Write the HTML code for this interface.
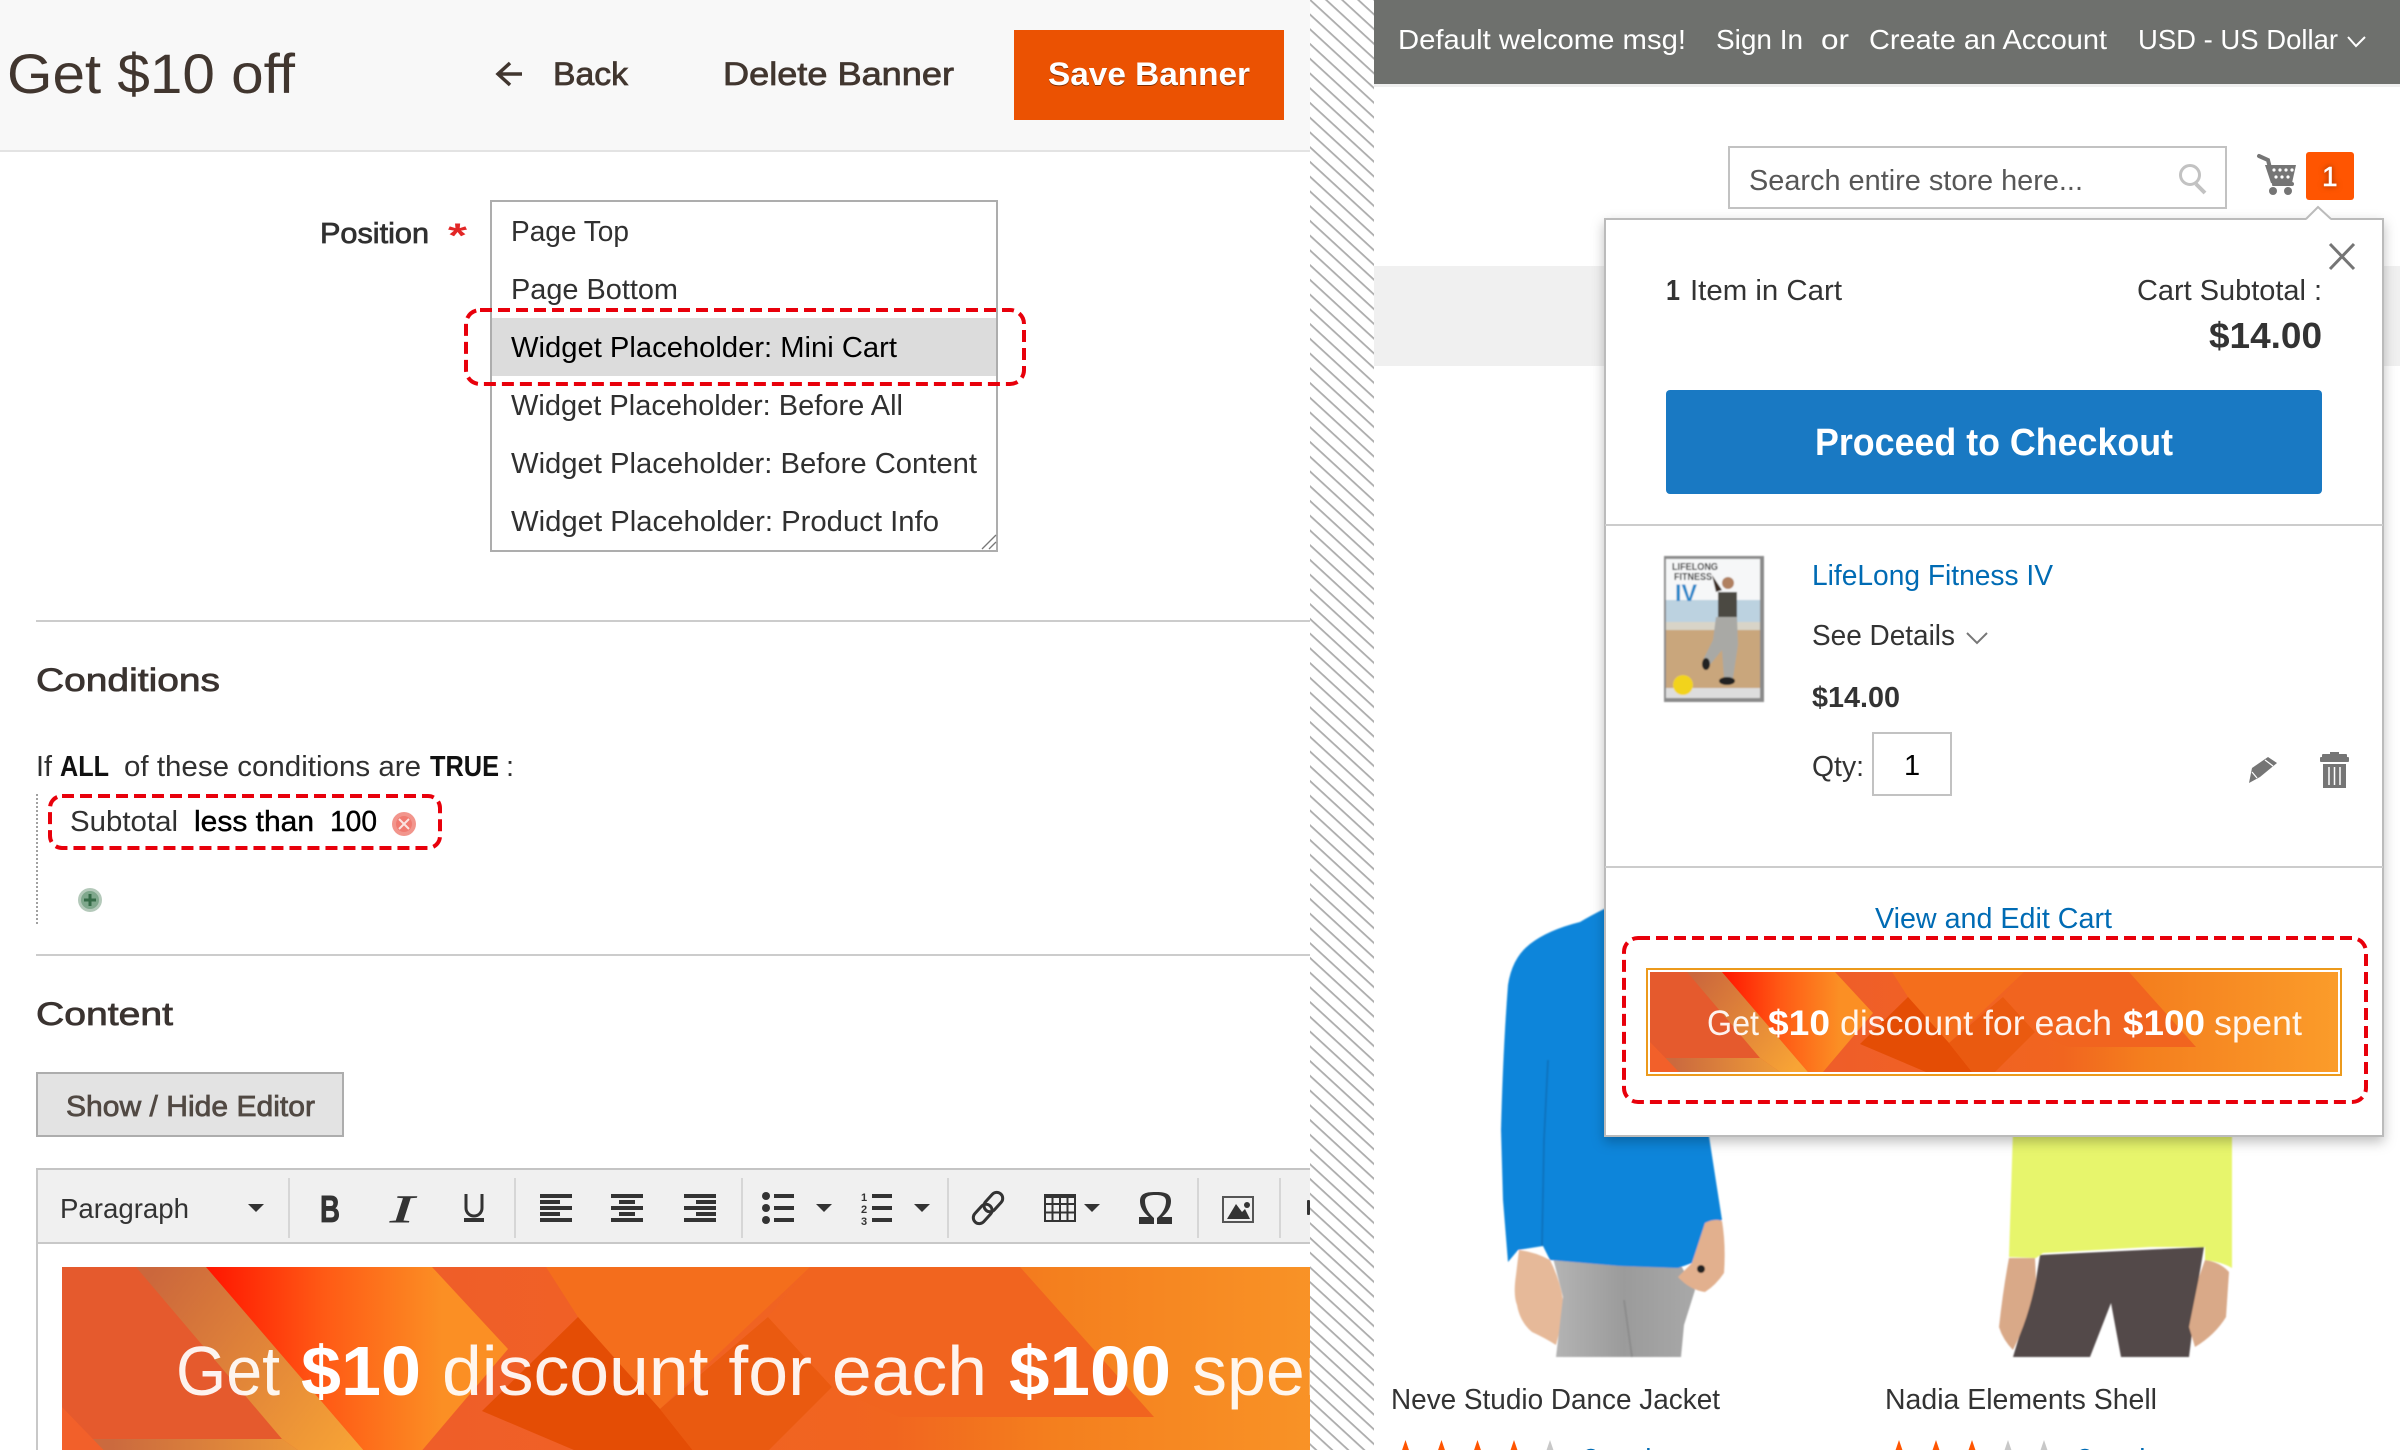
<!DOCTYPE html>
<html lang="en"><head><meta charset="utf-8"><title>Get $10 off</title>
<style>
html,body{margin:0;padding:0;background:#fff}
svg{display:block}
text{font-family:"Liberation Sans",sans-serif;white-space:pre}
.b{font-weight:700}
.s{stroke-width:.75px;paint-order:stroke}
.o{font-size:29px;fill:#303030}
.h{font-size:32px;fill:#3a3330;stroke:#3a3330}
.t{font-size:28px;fill:#fff}
.c{font-size:29px;fill:#333}
.l{fill:#006bb4}
</style></head><body>
<svg width="2400" height="1450" viewBox="0 0 2400 1450" xmlns="http://www.w3.org/2000/svg">
<defs>
<pattern id="st" patternUnits="userSpaceOnUse" width="100" height="10.85" patternTransform="translate(1310,13.3) rotate(42.6)">
<rect width="100" height="10.85" fill="#fff"/><rect y="0" width="100" height="1.8" fill="#acacac"/>
</pattern>
<linearGradient id="g0" x1="0" x2="1" y1="0" y2="0"><stop offset="0" stop-color="#e2592b"/><stop offset=".27" stop-color="#ef5e29"/><stop offset=".6" stop-color="#f1651f"/><stop offset=".72" stop-color="#f47f1e"/><stop offset="1" stop-color="#fb9c2a"/></linearGradient>
<linearGradient id="g1" gradientUnits="userSpaceOnUse" x1="40" y1="10" x2="150" y2="90"><stop offset="0" stop-color="#cb673c"/><stop offset="1" stop-color="#f8a435"/></linearGradient>
<linearGradient id="g2" gradientUnits="userSpaceOnUse" x1="72" y1="0" x2="190" y2="0"><stop offset="0" stop-color="#ff1500"/><stop offset=".5" stop-color="#ff5a15"/><stop offset="1" stop-color="#fb8f24"/></linearGradient>
<linearGradient id="g3" gradientUnits="userSpaceOnUse" x1="25" y1="0" x2="130" y2="0"><stop offset="0" stop-color="#cb6a3e"/><stop offset="1" stop-color="#ef9c38"/></linearGradient>
<linearGradient id="pn" x1="0" x2="1" y1="0" y2="0"><stop offset="0" stop-color="#b4b4b4"/><stop offset=".5" stop-color="#9b9b9b"/><stop offset="1" stop-color="#a8a8a8"/></linearGradient>
<g id="bn">
<rect width="688" height="100" fill="url(#g0)"/>
<polygon points="0,0 37,0 110,86 0,86" fill="#e55a2d"/>
<polygon points="37,0 72,0 158,100 130,100 110,86" fill="url(#g1)"/>
<polygon points="0,86 110,86 130,100 0,100" fill="url(#g3)"/>
<polygon points="0,70 29,100 0,100" fill="#f2602a"/>
<polygon points="72,0 185,0 223,41 173,100 158,100" fill="url(#g2)"/>
<polygon points="242,0 374,0 299,71 258,25" fill="#f46e1c"/>
<polygon points="258,25 299,71 322,100 276,100 210,72" fill="#e44d05"/>
<polygon points="353,25 299,71 322,100 345,100 385,60" fill="#ea5a10"/>
<polygon points="374,0 479,0 546,75 419,75 385,60 353,25" fill="#f1641f"/>
</g>
<filter id="sh" x="-5%" y="-5%" width="110%" height="110%"><feDropShadow dx="0" dy="5" stdDeviation="6" flood-color="#000" flood-opacity=".25"/></filter>
<filter id="bl" x="-10%" y="-10%" width="120%" height="120%"><feGaussianBlur stdDeviation=".7"/></filter>
<filter id="bl2" x="-10%" y="-10%" width="120%" height="120%"><feGaussianBlur stdDeviation=".9"/></filter>
<clipPath id="cb"><rect x="62" y="1267" width="1248" height="183"/></clipPath>
</defs>

<!-- LEFT -->
<rect width="1310" height="150" fill="#f8f8f8"/>
<rect y="150" width="1310" height="2" fill="#e3e3e3"/>
<text x="7" y="93" font-size="56" fill="#41362f" textLength="288" lengthAdjust="spacingAndGlyphs">Get $10 off</text>
<path d="M522 74H499M510 63L498 74L510 85" fill="none" stroke="#41362f" stroke-width="3.5"/>
<g class="s" font-size="32" fill="#41362f" stroke="#41362f">
<text x="553" y="85" textLength="75" lengthAdjust="spacingAndGlyphs">Back</text>
<text x="723" y="85" textLength="231" lengthAdjust="spacingAndGlyphs">Delete Banner</text>
</g>
<rect x="1014" y="30" width="270" height="90" fill="#eb5202"/>
<text x="1048" y="85" class="b" font-size="32" fill="#fff" textLength="202" lengthAdjust="spacingAndGlyphs" style="filter:drop-shadow(0 1px 0 rgba(0,0,0,.45))">Save Banner</text>

<text x="320" y="243" class="s" font-size="29" fill="#303030" stroke="#303030" textLength="109" lengthAdjust="spacingAndGlyphs">Position</text>
<text x="448" y="247" class="b" font-size="34" fill="#e22626" textLength="19" lengthAdjust="spacingAndGlyphs">*</text>

<rect x="491" y="201" width="506" height="350" fill="#fff" stroke="#adadad" stroke-width="2"/>
<rect x="492" y="318" width="504" height="58" fill="#dcdcdc"/>
<text x="511" y="241" class="o" textLength="118" lengthAdjust="spacingAndGlyphs">Page Top</text>
<text x="511" y="299" class="o" textLength="167" lengthAdjust="spacingAndGlyphs">Page Bottom</text>
<text x="511" y="357" class="o" style="fill:#000" textLength="386" lengthAdjust="spacingAndGlyphs">Widget Placeholder: Mini Cart</text>
<text x="511" y="415" class="o" textLength="392" lengthAdjust="spacingAndGlyphs">Widget Placeholder: Before All</text>
<text x="511" y="473" class="o" textLength="466" lengthAdjust="spacingAndGlyphs">Widget Placeholder: Before Content</text>
<text x="511" y="531" class="o" textLength="428" lengthAdjust="spacingAndGlyphs">Widget Placeholder: Product Info</text>
<path d="M982 549L996 535M989 549L996 542" stroke="#777" stroke-width="1.3" fill="none"/>
<rect x="466" y="310" width="558" height="74" rx="14" fill="none" stroke="#e8000b" stroke-width="4" stroke-dasharray="12 6"/>

<rect x="36" y="620" width="1274" height="2" fill="#ccc"/>
<text x="36" y="691" class="h s" textLength="184" lengthAdjust="spacingAndGlyphs">Conditions</text>
<text x="36" y="776" class="o" textLength="16" lengthAdjust="spacingAndGlyphs">If</text>
<text x="60" y="776" class="o b" style="fill:#111" textLength="49" lengthAdjust="spacingAndGlyphs">ALL</text>
<text x="124" y="776" class="o" textLength="297" lengthAdjust="spacingAndGlyphs">of these conditions are</text>
<text x="430" y="776" class="o b" style="fill:#111" textLength="69" lengthAdjust="spacingAndGlyphs">TRUE</text>
<text x="506" y="776" class="o">:</text>
<line x1="37" y1="794" x2="37" y2="925" stroke="#777" stroke-width="1.4" stroke-dasharray="2 2"/>
<rect x="50" y="796" width="390" height="52" rx="12" fill="none" stroke="#e8000b" stroke-width="4" stroke-dasharray="12 6"/>
<text x="70" y="831" class="o" textLength="108" lengthAdjust="spacingAndGlyphs">Subtotal</text>
<text x="194" y="831" class="o s" style="fill:#000;stroke:#000;stroke-width:.4px" textLength="120" lengthAdjust="spacingAndGlyphs">less than</text>
<text x="330" y="831" class="o s" style="fill:#000;stroke:#000;stroke-width:.4px" textLength="47" lengthAdjust="spacingAndGlyphs">100</text>
<circle cx="404" cy="824" r="12" fill="#f2958c"/><circle cx="404" cy="824" r="8" fill="#f07a70"/>
<path d="M399 819L409 829M409 819L399 829" stroke="#fbe3e0" stroke-width="2"/>
<circle cx="90" cy="900" r="12" fill="#b4c9ba"/><circle cx="90" cy="900" r="9" fill="#7fa78c"/>
<path d="M90 894V906M84 900H96" stroke="#356b47" stroke-width="3"/>
<rect x="36" y="954" width="1274" height="2" fill="#ccc"/>
<text x="36" y="1025" class="h s" textLength="137" lengthAdjust="spacingAndGlyphs">Content</text>
<rect x="37" y="1073" width="306" height="63" fill="#e3e3e3" stroke="#adadad" stroke-width="2"/>
<text x="66" y="1116" class="s" font-size="29" fill="#514943" stroke="#514943" textLength="249" lengthAdjust="spacingAndGlyphs">Show / Hide Editor</text>

<!-- Editor -->
<rect x="36" y="1168" width="1274" height="282" fill="#fff"/>
<rect x="36" y="1168" width="2" height="282" fill="#c8c8c8"/>
<rect x="38" y="1170" width="1272" height="73" fill="#f0f0f0"/>
<rect x="36" y="1168" width="1274" height="2" fill="#c4c4c4"/>
<rect x="36" y="1242" width="1274" height="2" fill="#c8c8c8"/>
<g fill="#d6d6d6"><rect x="288" y="1178" width="2" height="60"/><rect x="514" y="1178" width="2" height="60"/><rect x="741" y="1178" width="2" height="60"/><rect x="947" y="1178" width="2" height="60"/><rect x="1197" y="1178" width="2" height="60"/><rect x="1279" y="1178" width="2" height="60"/></g>
<text x="60" y="1218" font-size="28" fill="#333" textLength="129" lengthAdjust="spacingAndGlyphs">Paragraph</text>
<g fill="#333">
<polygon points="248,1204 264,1204 256,1212"/><polygon points="816,1204 832,1204 824,1212"/><polygon points="914,1204 930,1204 922,1212"/><polygon points="1084,1204 1100,1204 1092,1212"/>
<text x="320" y="1222" class="b" font-size="38" stroke="#333" stroke-width=".8" textLength="20" lengthAdjust="spacingAndGlyphs">B</text>
<text x="390" y="1222" font-size="39" font-style="italic" stroke="#333" stroke-width=".5" style="font-family:'Liberation Serif',serif" textLength="24" lengthAdjust="spacingAndGlyphs">I</text>
<rect x="464" y="1218" width="20" height="4"/>
<rect x="540" y="1194" width="32" height="4"/><rect x="540" y="1200" width="20" height="4"/><rect x="540" y="1206" width="32" height="4"/><rect x="540" y="1212" width="20" height="4"/><rect x="540" y="1218" width="32" height="4"/>
<rect x="611" y="1194" width="32" height="4"/><rect x="619" y="1200" width="16" height="4"/><rect x="611" y="1206" width="32" height="4"/><rect x="619" y="1212" width="16" height="4"/><rect x="611" y="1218" width="32" height="4"/>
<rect x="684" y="1194" width="32" height="4"/><rect x="696" y="1200" width="20" height="4"/><rect x="684" y="1206" width="32" height="4"/><rect x="696" y="1212" width="20" height="4"/><rect x="684" y="1218" width="32" height="4"/>
<circle cx="766" cy="1196" r="4"/><circle cx="766" cy="1208" r="4"/><circle cx="766" cy="1220" r="4"/>
<rect x="774" y="1194" width="20" height="4"/><rect x="774" y="1206" width="20" height="4"/><rect x="774" y="1218" width="20" height="4"/>
<rect x="872" y="1194" width="20" height="4"/><rect x="872" y="1206" width="20" height="4"/><rect x="872" y="1218" width="20" height="4"/>
<text x="861" y="1201" class="b" font-size="11">1</text><text x="861" y="1213" class="b" font-size="11">2</text><text x="861" y="1225" class="b" font-size="11">3</text>
</g>
<path d="M466 1194V1208A8 8 0 0 0 482 1208V1194" fill="none" stroke="#333" stroke-width="3"/>
<g transform="rotate(-48 988 1208)" fill="none" stroke="#333" stroke-width="3"><rect x="969" y="1202" width="22" height="12" rx="6"/><rect x="985" y="1202" width="22" height="12" rx="6"/></g>
<g fill="none" stroke="#333" stroke-width="2"><rect x="1045" y="1195" width="30" height="26"/><path d="M1052.5 1195V1221M1060 1195V1221M1067.5 1195V1221M1045 1204H1075M1045 1212.5H1075"/></g>
<rect x="1044" y="1194" width="32" height="4" fill="#333"/>
<path d="M1139 1224V1217H1149C1143 1212 1140 1207 1140 1201C1140 1193 1147 1192 1155.500 1192C1164 1192 1171 1193 1171 1201C1171 1207 1168 1212 1162 1217H1172V1224H1157V1218C1163 1213 1166 1207 1166 1201C1166 1196 1161 1195 1155.500 1195C1150 1195 1145 1196 1145 1201C1145 1207 1148 1213 1154 1218V1224Z" fill="#333"/>
<rect x="1223" y="1197" width="30" height="25" fill="#f0f0f0" stroke="#555" stroke-width="2"/>
<circle cx="1247" cy="1205" r="3" fill="#333"/><polygon points="1227,1219 1236,1204 1242,1212 1245,1209 1250,1219" fill="#333"/>
<rect x="1307" y="1200" width="3" height="15" rx="1" fill="#333"/>
<g clip-path="url(#cb)">
<use href="#bn" transform="translate(62,1267) scale(2)"/>
<g fill="#fff" font-size="70">
<text x="176" y="1395" fill-opacity=".92" textLength="104" lengthAdjust="spacingAndGlyphs">Get</text>
<text x="301" y="1395" class="b" textLength="120" lengthAdjust="spacingAndGlyphs">$10</text>
<text x="442" y="1395" fill-opacity=".92" textLength="545" lengthAdjust="spacingAndGlyphs">discount for each</text>
<text x="1009" y="1395" class="b" textLength="162" lengthAdjust="spacingAndGlyphs">$100</text>
<text x="1192" y="1395" fill-opacity=".92">spent</text>
</g></g>

<!-- STRIPES -->
<rect x="1310" width="64" height="1450" fill="url(#st)"/>

<!-- RIGHT -->
<rect x="1374" width="1026" height="84" fill="#6e706d"/>
<rect x="1374" y="84" width="1026" height="3" fill="#efefef"/>
<text x="1398" y="49" class="t" textLength="288" lengthAdjust="spacingAndGlyphs">Default welcome msg!</text>
<text x="1716" y="49" class="t" textLength="87" lengthAdjust="spacingAndGlyphs">Sign In</text>
<text x="1821" y="49" class="t" textLength="28" lengthAdjust="spacingAndGlyphs">or</text>
<text x="1869" y="49" class="t" textLength="238" lengthAdjust="spacingAndGlyphs">Create an Account</text>
<text x="2138" y="49" class="t" textLength="200" lengthAdjust="spacingAndGlyphs">USD - US Dollar</text>
<path d="M2348 37L2356 46L2365 37" fill="none" stroke="#fff" stroke-width="2"/>

<rect x="1729" y="147" width="497" height="61" fill="#fff" stroke="#c2c2c2" stroke-width="2"/>
<text x="1749" y="190" font-size="29" fill="#575757" textLength="334" lengthAdjust="spacingAndGlyphs">Search entire store here...</text>
<circle cx="2190" cy="175" r="9.5" fill="none" stroke="#c2c2c2" stroke-width="3"/>
<path d="M2196 184L2205 193" stroke="#c2c2c2" stroke-width="4"/>
<!-- cart -->
<path d="M2259 156L2268 160L2274 184H2292" fill="none" stroke="#757575" stroke-width="4" stroke-linecap="round"/>
<polygon points="2265,165 2296,165 2292,183 2271,183" fill="#757575"/>
<g fill="#fff"><circle cx="2274" cy="170" r="1.6"/><circle cx="2280" cy="170" r="1.6"/><circle cx="2286" cy="170" r="1.6"/><circle cx="2292" cy="170" r="1.6"/><circle cx="2276" cy="177" r="1.6"/><circle cx="2282" cy="177" r="1.6"/><circle cx="2288" cy="177" r="1.6"/></g>
<circle cx="2273" cy="191" r="4" fill="#757575"/><circle cx="2288" cy="191" r="4" fill="#757575"/>
<rect x="2306" y="152" width="48" height="48" rx="3" fill="#ff5501"/>
<text x="2322" y="186" font-size="28" fill="#fff" stroke="#fff" stroke-width=".5" style="filter:drop-shadow(0 0 3px rgba(120,40,0,.8))">1</text>

<!-- gray band -->
<rect x="1374" y="266" width="1026" height="100" fill="#f0f0f0"/>

<!-- products -->
<g filter="url(#bl2)">
<path d="M1519 1250Q1535 1252 1550 1260Q1560 1280 1563 1300Q1562 1325 1556 1345Q1545 1338 1532 1332Q1520 1322 1517 1305Q1513 1295 1516 1275Z" fill="#e6b999"/>
<path d="M1553 1258L1680 1264L1695 1290L1684 1325L1681 1357H1556L1563 1297Z" fill="url(#pn)"/>
<path d="M1624 1300L1632 1357" stroke="#8c8c8c" stroke-width="2" fill="none"/>
<path d="M1604 909Q1590 916 1580 922Q1548 930 1530 944Q1512 958 1508 985Q1503 1050 1501 1130L1503 1200L1508 1262L1518 1250L1543 1246L1550 1260L1620 1266L1678 1268L1692 1263L1705 1226L1722 1220L1708 1130Q1700 1030 1680 950L1630 905Z" fill="#0a85da"/>
<path d="M1542 1246L1544 1140L1548 1060" stroke="#0873bf" stroke-width="2" fill="none"/>
<path d="M1705 1223Q1715 1218 1722 1221Q1726 1245 1724 1273Q1716 1285 1705 1292Q1690 1290 1678 1277L1692 1263Z" fill="#e2b08e"/>
<circle cx="1701" cy="1269" r="4" fill="#222"/>
<path d="M2040 1255L2204 1247L2199 1277L2189 1357H2121L2111 1303L2090 1357H2013L2036 1280Z" fill="#53494a"/>
<path d="M2013 1130L2232 1130L2232 1268Q2222 1262 2205 1260V1247L2150 1247L2043 1253L2036 1258L2009 1257Z" fill="#e7f56c"/>
<path d="M2009 1258L2035 1258L2036 1280Q2028 1320 2013 1350Q2003 1340 1999 1327Q2003 1290 2009 1258Z" fill="#d9a988"/>
<path d="M2205 1260Q2220 1262 2229 1272L2226 1317Q2215 1335 2195 1347L2189 1327L2199 1277Z" fill="#d9a988"/>
</g>
<text x="1391" y="1409" class="c" textLength="329" lengthAdjust="spacingAndGlyphs">Neve Studio Dance Jacket</text>
<text x="1885" y="1409" class="c" textLength="272" lengthAdjust="spacingAndGlyphs">Nadia Elements Shell</text>
<g fill="#ff5501"><polygon points="1405.5,1440 1398,1462 1413,1462"/><polygon points="1441.5,1440 1434,1462 1449,1462"/><polygon points="1477.5,1440 1470,1462 1485,1462"/><polygon points="1514,1440 1506.5,1462 1521.5,1462"/>
<polygon points="1899,1440 1891.5,1462 1906.5,1462"/><polygon points="1936,1440 1928.5,1462 1943.5,1462"/><polygon points="1972,1440 1964.5,1462 1979.5,1462"/></g>
<g fill="#c8c8c8"><polygon points="1550,1440 1542.5,1462 1557.5,1462"/><polygon points="2008,1440 2000.5,1462 2015.500,1462"/><polygon points="2044,1440 2036.5,1462 2051.5,1462"/></g>
<text x="1583" y="1468" font-size="28" class="l">3 reviews</text>
<text x="2077" y="1468" font-size="28" class="l">3 reviews</text>

<!-- popup -->
<rect x="1605" y="219" width="778" height="917" fill="#fff" stroke="#bbb" stroke-width="2" filter="url(#sh)"/>
<polygon points="2306,220 2318,207 2331,220" fill="#fff"/>
<polyline points="2306,219 2318,207 2331,219" fill="none" stroke="#bbb" stroke-width="2"/>
<path d="M2330 244L2354 269M2354 244L2330 269" stroke="#757575" stroke-width="3" fill="none"/>
<text x="1666" y="300" class="c b" textLength="14" lengthAdjust="spacingAndGlyphs">1</text>
<text x="1690" y="300" class="c" textLength="152" lengthAdjust="spacingAndGlyphs">Item in Cart</text>
<text x="2137" y="300" class="c" textLength="185" lengthAdjust="spacingAndGlyphs">Cart Subtotal :</text>
<text x="2209" y="348" class="b" font-size="36" fill="#333" textLength="113" lengthAdjust="spacingAndGlyphs">$14.00</text>
<rect x="1666" y="390" width="656" height="104" rx="4" fill="#1979c3"/>
<text x="1815" y="455" class="b" font-size="38" fill="#fff" textLength="358" lengthAdjust="spacingAndGlyphs">Proceed to Checkout</text>
<rect x="1605" y="524" width="778" height="2" fill="#ccc"/>

<!-- thumb -->
<g filter="url(#bl2)">
<rect x="1664" y="556" width="100" height="146" fill="#8a8a8a"/>
<rect x="1666" y="559" width="94" height="139" fill="#f6f7f8"/>
<rect x="1666" y="600" width="94" height="22" fill="#bcd2e0"/>
<rect x="1666" y="622" width="94" height="8" fill="#d8d4c8"/>
<rect x="1666" y="630" width="94" height="58" fill="#c9a67c"/>
<rect x="1666" y="688" width="94" height="10" fill="#ddd"/>
<text x="1672" y="570" font-size="10" class="b" fill="#222" textLength="46" lengthAdjust="spacingAndGlyphs">LIFELONG</text>
<text x="1674" y="580" font-size="10" class="b" fill="#222" textLength="38" lengthAdjust="spacingAndGlyphs">FITNESS</text>
<text x="1675" y="601" font-size="24" class="b" fill="#1f86c9" textLength="22" lengthAdjust="spacingAndGlyphs">IV</text>
<circle cx="1683" cy="685" r="10" fill="#f2d31e"/>
<path d="M1712 575L1722 590L1716 592Z" fill="#3a2a20"/>
<circle cx="1728" cy="583" r="6" fill="#b08060"/>
<rect x="1718" y="592" width="19" height="25" fill="#4c4a42"/>
<path d="M1716 617H1737L1738 645L1733 678H1724L1722 650L1709 666L1703 660L1713 640Z" fill="#a9a9a5"/>
<ellipse cx="1727" cy="681" rx="8" ry="4" fill="#222"/><ellipse cx="1706" cy="664" rx="4" ry="6" fill="#222"/>
</g>

<text x="1812" y="585" font-size="29" class="l" textLength="241" lengthAdjust="spacingAndGlyphs">LifeLong Fitness IV</text>
<text x="1812" y="645" class="c" textLength="143" lengthAdjust="spacingAndGlyphs">See Details</text>
<path d="M1967 633L1977 643L1987 633" fill="none" stroke="#777" stroke-width="2"/>
<text x="1812" y="707" class="c b" textLength="88" lengthAdjust="spacingAndGlyphs">$14.00</text>
<text x="1812" y="776" class="c" textLength="52" lengthAdjust="spacingAndGlyphs">Qty:</text>
<rect x="1873" y="733" width="78" height="62" fill="#fff" stroke="#c2c2c2" stroke-width="2"/>
<text x="1904" y="775" font-size="29" fill="#000">1</text>
<path d="M2249 783L2252 768L2268 757L2277 763L2260 777Z" fill="#757575"/>
<path d="M2252 772L2257 778" stroke="#fff" stroke-width="1.2"/>
<path d="M2265 760L2273 766" stroke="#fff" stroke-width="1.2"/>
<path d="M2322 759H2347V755Q2347 754 2346 754H2339V752H2330V754H2323Q2322 754 2322 755Z" fill="#757575"/>
<rect x="2320" y="757" width="29" height="5" rx="1" fill="#757575"/>
<rect x="2323" y="764" width="23" height="24" fill="#757575"/>
<path d="M2329 767V785M2334.5 767V785M2340 767V785" stroke="#fff" stroke-width="1.5"/>
<rect x="1605" y="866" width="778" height="2" fill="#ccc"/>
<text x="1875" y="928" font-size="29" class="l" textLength="237" lengthAdjust="spacingAndGlyphs">View and Edit Cart</text>

<rect x="1647" y="969" width="694" height="106" fill="#fff" stroke="#ec9a1c" stroke-width="2"/>
<use href="#bn" transform="translate(1650,972)"/>
<g fill="#fff" font-size="35">
<text x="1707" y="1035" fill-opacity=".92" textLength="52" lengthAdjust="spacingAndGlyphs">Get</text>
<text x="1768" y="1035" class="b" textLength="62" lengthAdjust="spacingAndGlyphs">$10</text>
<text x="1840" y="1035" fill-opacity=".92" textLength="272" lengthAdjust="spacingAndGlyphs">discount for each</text>
<text x="2123" y="1035" class="b" textLength="82" lengthAdjust="spacingAndGlyphs">$100</text>
<text x="2214" y="1035" fill-opacity=".92" textLength="88" lengthAdjust="spacingAndGlyphs">spent</text>
</g>
<rect x="1624" y="938" width="742" height="164" rx="14" fill="none" stroke="#e8000b" stroke-width="4" stroke-dasharray="12 6"/>
</svg>
</body></html>
